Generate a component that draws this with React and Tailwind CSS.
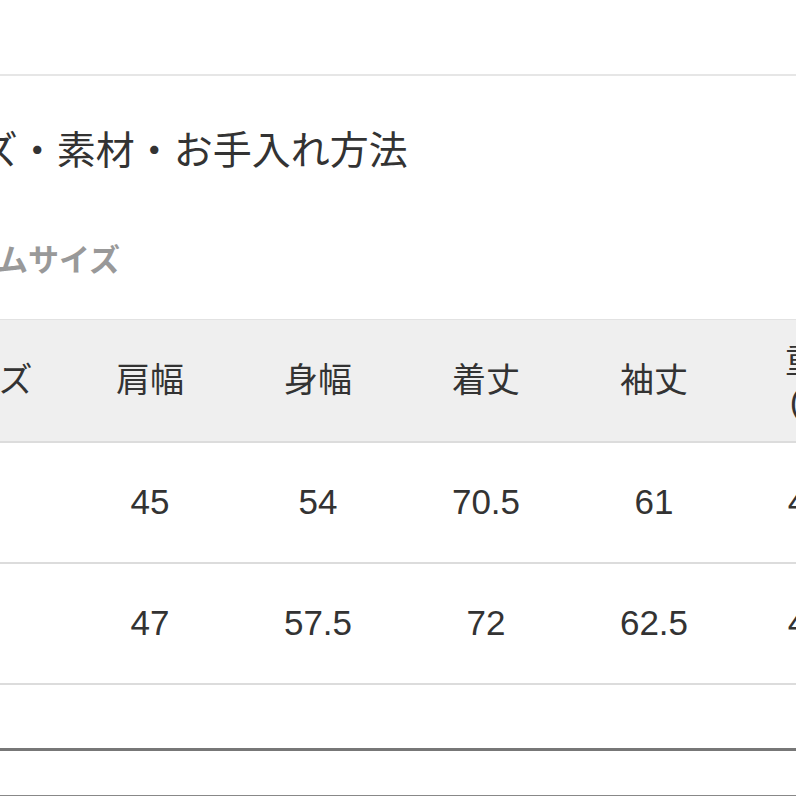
const headers = ["サイズ", "肩幅", "身幅", "着丈", "袖丈"];

const rows = [
  ["M", "45", "54", "70.5", "61", "430"],
  ["L", "47", "57.5", "72", "62.5", "460"],
];

const cell = "w-[168px] shrink-0 flex items-center justify-center";

export default function App() {
  return (
    <div
      className="w-[796px] h-[796px] overflow-hidden bg-white text-[#333]"
      style={{ fontFamily: '"Liberation Sans", "Noto Sans CJK JP", sans-serif' }}
    >
      <div className="h-[74px]" />
      <div className="border-t-2 border-[#e6e6e6]" />

      <h2 className="mt-[55px] ml-[-98px] whitespace-nowrap text-[39px] leading-[39px] font-normal">
        サイズ・素材・お手入れ方法
      </h2>

      <p className="mt-[75px] ml-[-93px] whitespace-nowrap text-[31px] leading-[31px] font-bold text-[#999]">
        アイテムサイズ
      </p>

      <div className="mt-[43px] ml-[-102px] w-[1010px]">
        <div className="flex h-[124px] bg-[#efefef] border-t border-b-2 border-t-[#e2e2e2] border-b-[#dcdcdc] text-[34px]">
          {headers.map((h) => (
            <div key={h} className={cell}>
              {h}
            </div>
          ))}
          <div className={cell + " flex-col leading-[40px] pr-[6px]"}>
            <span>重量</span>
            <span>(kg)</span>
          </div>
        </div>
        {rows.map((r, i) => (
          <div
            key={i}
            className="flex h-[121px] border-b-2 border-[#dcdcdc] text-[35px]"
          >
            {r.map((v, j) => (
              <div key={j} className={cell + (j === 5 ? " pr-[10px]" : "")}>
                {v}
              </div>
            ))}
          </div>
        ))}
      </div>

      <div className="mt-[63px] border-t-[3px] border-[#777]" />
      <div className="mt-[44px] border-t-2 border-[#888]" />
    </div>
  );
}
